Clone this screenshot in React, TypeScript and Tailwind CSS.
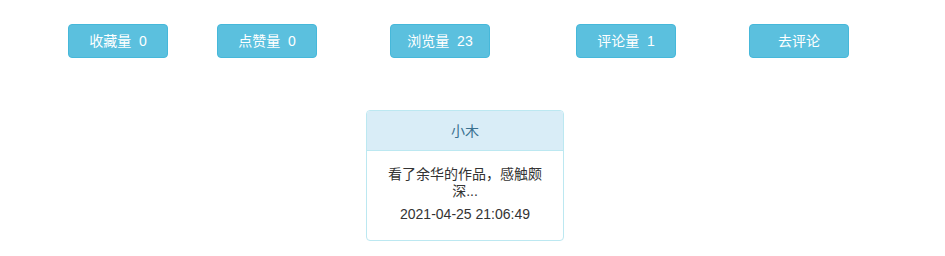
import React from "react";

const font = { fontFamily: '"Liberation Sans", "Noto Sans CJK SC", sans-serif' };

function Btn({ children, className = "" }: { children: React.ReactNode; className?: string }) {
  return (
    <button
      className={`w-[100px] h-[34px] rounded-[4px] border border-[#46b8da] bg-[#5bc0de] text-white text-[14px] leading-[20px] whitespace-pre ${className}`}
    >
      {children}
    </button>
  );
}

export default function App() {
  return (
    <div className="w-[945px] h-[256px] bg-white" style={font}>
      <div className="flex pt-[24px] pl-[68px]">
        <Btn>收藏量  0</Btn>
        <Btn className="ml-[49px]">点赞量  0</Btn>
        <Btn className="ml-[73px]">浏览量  23</Btn>
        <Btn className="ml-[86px]">评论量  1</Btn>
        <Btn className="ml-[73px]">去评论</Btn>
      </div>
      <div className="pl-[366px] pt-[52px]">
        <div className="w-[198px] rounded-[4px] border border-[#bce8f1] bg-white overflow-hidden">
          <div className="h-[40px] bg-[#d9edf7] border-b border-[#bce8f1] text-[#3a7190] text-[14px] leading-[20px] flex items-center justify-center">
            小木
          </div>
          <div className="px-[15px] pt-[15px] pb-[17px] text-center text-[#333] text-[14px] leading-[17px]">
            <div>看了余华的作品，感触颇深...</div>
            <div className="mt-[6px]">2021-04-25 21:06:49</div>
          </div>
        </div>
      </div>
    </div>
  );
}
